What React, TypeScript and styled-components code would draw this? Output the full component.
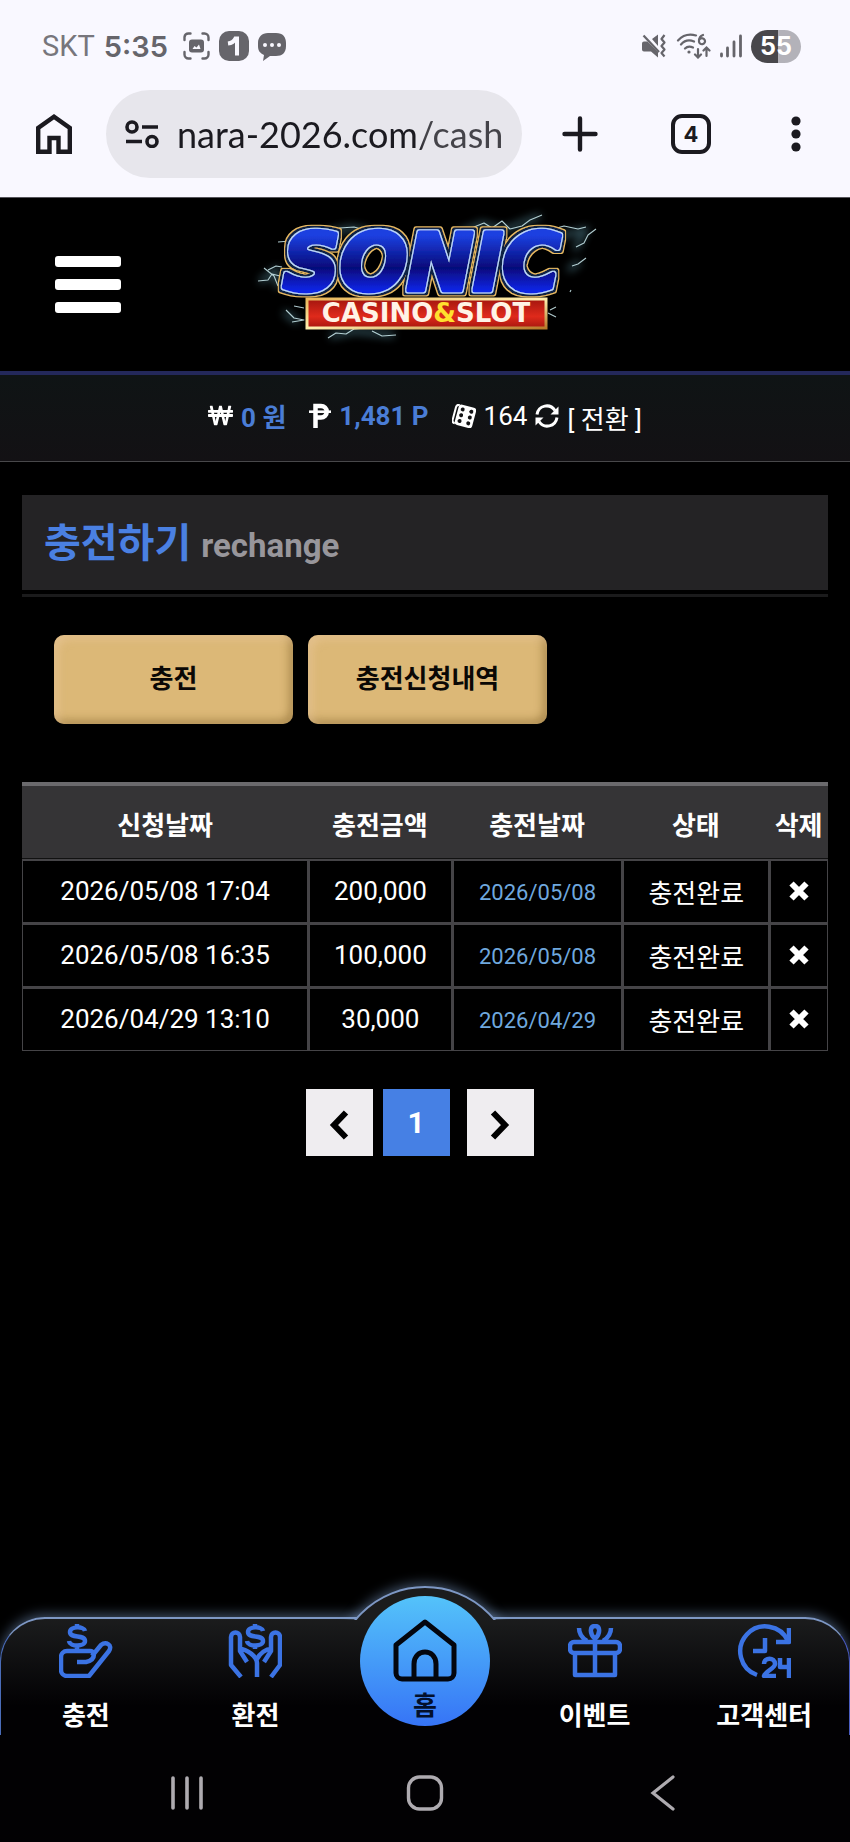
import { useState } from 'react';
import styled, { createGlobalStyle } from 'styled-components';
import { FaWonSign } from 'react-icons/fa';

const GlobalStyle = createGlobalStyle`
  * {
    box-sizing: border-box;
  }
  body {
    margin: 0;
    background-color: #000;
    color: #fff;
    font-family: Roboto, 'Noto Sans CJK KR', sans-serif;
    font-size: 26px;
  }
  button {
    padding: 0;
    border: 0;
    background: none;
    color: inherit;
    font: inherit;
    cursor: pointer;
  }
  a {
    color: inherit;
    text-decoration: none;
  }
  svg {
    display: block;
    flex-shrink: 0;
  }
`;

const Page = styled.div`
  display: flex;
  flex-direction: column;
  min-height: 100vh;
`;

const Browser = styled.div`
  background-color: #f9f8ff;
  color: #1b1a20;
  border-bottom: 1px solid #55545a;
`;

const StatusRow = styled.div`
  display: flex;
  align-items: center;
  justify-content: space-between;
  height: 90px;
  padding: 2px 49px 0 42px;
  color: #66656b;
`;

const StatusGroup = styled.div`
  display: flex;
  align-items: center;
  gap: 9px;
`;

const Carrier = styled.span`
  font-size: 29px;
  color: #77767c;
`;

const Clock = styled.span`
  margin-right: 6px;
  font-family: Inter, sans-serif;
  font-size: 29px;
  font-weight: 600;
`;

const Battery = styled.span`
  display: flex;
  align-items: center;
  justify-content: center;
  width: 50px;
  height: 33px;
  border-radius: 17px;
  background: linear-gradient(90deg, #48474b 55%, #b3b2b9 55%);
  color: #fff;
  font-family: Inter, sans-serif;
  font-size: 25px;
  font-weight: 700;
`;

const AddressRow = styled.div`
  display: flex;
  align-items: center;
  height: 107px;
  padding: 0 49px 19px 36px;
`;

const IconButton = styled.button`
  flex-shrink: 0;
`;

const Omnibox = styled.label`
  display: flex;
  flex: 1;
  align-items: center;
  gap: 18px;
  min-width: 0;
  height: 88px;
  margin: 0 40px 0 34px;
  padding: 0 19px;
  border-radius: 44px;
  background-color: #e7e6ec;
`;

const UrlInput = styled.input`
  flex: 1;
  min-width: 0;
  height: 60px;
  padding: 0;
  border: 0;
  outline: 0;
  background: none;
  color: #1b1a20;
  font-family: Lato, sans-serif;
  font-size: 36px;
  mask-image: linear-gradient(90deg, #000 74%, rgba(0, 0, 0, 0.8) 76%);
`;

const TabCount = styled.button`
  width: 40px;
  height: 40px;
  margin: 0 80px 0 73px;
  border: 4px solid #1b1a20;
  border-radius: 11px;
  font-family: Inter, sans-serif;
  font-size: 22px;
  font-weight: 700;
  line-height: 32px;
`;

const Header = styled.header`
  display: grid;
  grid-template-columns: 1fr auto 1fr;
  align-items: center;
  padding: 0 55px;
  border-bottom: 4px solid #23285a;
`;

const MenuButton = styled.button`
  display: flex;
  flex-direction: column;
  gap: 12px;
  width: 66px;
`;

const MenuBar = styled.span`
  height: 11px;
  border-radius: 3px;
  background-color: #fff;
`;

const Wallet = styled.div`
  display: flex;
  align-items: center;
  justify-content: center;
  height: 87px;
  padding-bottom: 5px;
  border-bottom: 1px solid #48484a;
  background: linear-gradient(#0f1415, #131114);
`;

const WalletItem = styled.span`
  display: flex;
  align-items: center;
  gap: 8px;
  margin-right: 23px;
`;

const Balance = styled.strong`
  color: #4a7dd6;
`;

const Switch = styled.button`
  display: flex;
  align-items: center;
  gap: 8px;
  margin-left: -15px;
`;

const SwitchText = styled.span`
  padding-top: 4px;
`;

const Main = styled.main`
  flex: 1;
  padding: 33px 22px 60px;
`;

const Title = styled.h1`
  display: flex;
  align-items: baseline;
  gap: 10px;
  height: 95px;
  margin: 0;
  padding: 0 22px;
  background-color: #242325;
  color: #4a80e2;
  font-size: 40px;
  line-height: 98px;
`;

const SubTitle = styled.small`
  color: #98969b;
  font-size: 33px;
`;

const TitleLine = styled.div`
  height: 3px;
  margin-top: 4px;
  background-color: #1b1b1c;
`;

const ButtonRow = styled.div`
  display: flex;
  gap: 15px;
  padding: 38px 32px 58px;
`;

const GoldButton = styled.button`
  flex: 0 1 239px;
  height: 89px;
  padding-bottom: 7px;
  border-radius: 10px;
  background-color: #dcb877;
  box-shadow:
    inset 4px 4px 8px rgba(240, 205, 165, 0.5),
    inset -4px -4px 8px rgba(90, 60, 10, 0.35);
  color: #0a0805;
  font-weight: 700;
`;

const Table = styled.table`
  width: 100%;
  table-layout: fixed;
  border-spacing: 0;
  text-align: center;
`;

const Th = styled.th<{ $width: string }>`
  width: ${(props) => props.$width};
  height: 77px;
  padding: 2px 0 0;
  border-top: 4px solid #6b6a6d;
  border-bottom: 1px solid #111;
  background-color: #353436;
  white-space: nowrap;
`;

const Td = styled.td`
  height: 64px;
  padding: 0 0 1px;
  border: 1px solid #454447;
  border-top-width: 2px;

  & + & {
    border-left-width: 2px;
  }
`;

const PaidDate = styled.span`
  color: #6fa8de;
  font-size: 22px;
`;

const DeleteButton = styled.button`
  display: block;
  margin: 0 auto;
`;

const Pagination = styled.nav`
  display: flex;
  justify-content: center;
  gap: 10px;
  margin-top: 38px;
  padding-right: 11px;
`;

const PageButton = styled.button`
  display: flex;
  align-items: center;
  justify-content: center;
  width: 67px;
  height: 67px;
  padding-top: 5px;
  background-color: #efedf0;
  color: #000;
`;

const CurrentPage = styled(PageButton)`
  margin-right: 7px;
  padding: 0;
  background-color: #4680e4;
  color: #fff;
  font-size: 30px;
  font-weight: 700;
`;

const BottomNav = styled.nav`
  position: relative;
  display: grid;
  grid-template-columns: repeat(5, 1fr);
  height: 118px;
  border: 2px solid #7d97c4;
  border-left: 1px solid #4a6cb8;
  border-right: 1px solid #4a5cc0;
  border-bottom: 0;
  border-radius: 45px 45px 0 0;
  background: linear-gradient(#1b1c1d, #020103 75%);
  box-shadow: 0 -3px 12px rgba(130, 165, 210, 0.45);
`;

/* only the cap of the circle that rises over the bar is shown */
const NavBump = styled.span`
  position: absolute;
  top: -33px;
  left: 50%;
  width: 182px;
  height: 182px;
  border: 2px solid #7d97c4;
  border-radius: 50%;
  background-color: #1b1c1d;
  box-shadow: 0 -3px 12px rgba(130, 165, 210, 0.45);
  transform: translateX(-50%);
  clip-path: inset(-20px 0 148px 0);
`;

const NavLink = styled.a`
  display: flex;
  flex-direction: column;
  align-items: center;
  gap: 19px;
  padding-top: 5px;
  font-weight: 700;
  line-height: 38px;
  white-space: nowrap;
`;

const NavIcon = styled.svg`
  width: 54px;
  height: 54px;
  fill: none;
  stroke: #3b73e4;
  stroke-width: 4.5;
  stroke-linejoin: round;
`;

const HomeLink = styled.a`
  position: relative;
  display: flex;
  flex-direction: column;
  align-items: center;
  justify-self: center;
  width: 130px;
  height: 130px;
  margin-top: -23px;
  padding-top: 22px;
  border-radius: 50%;
  background: linear-gradient(#54c3fa, #3674f6);
  color: #03102c;
  font-weight: 700;
  line-height: 48px;
`;

const SystemNav = styled.div`
  position: relative;
  display: flex;
  align-items: center;
  justify-content: center;
  gap: 198px;
  height: 107px;
  padding-top: 8px;
  background-color: #020103;
`;

const navItems = [
  {
    name: '충전',
    icon: (
      <>
        <path d="M26 7C25 2 11 2 11 8c0 7 15 2 15 9 0 6-15 6-16 0M18 0v5M18 20v7" />
        <path d="M18 38h9c5-1 8-4 8-8 0-2-2-3-4-3H8a6 6 0 0 0-6 6v13a6 6 0 0 0 6 6h22l20-25c4-6-3-10-8-6L33 32" />
      </>
    ),
  },
  {
    name: '환전',
    icon: (
      <>
        <path d="M35 7C34 2 20 2 20 8c0 7 15 2 15 9 0 6-15 6-16 0M27 0v5M27 20v5" />
        <path d="M13 53L3 41V13c0-6 9-6 9 0v14l7 11M12 25c6 0 17 7 17 14v14M43 53l9-12V13c0-6-9-6-9 0v14l-7 11M43 25c-5 0-11 4-14 10" />
      </>
    ),
  },
  { name: '홈', icon: null },
  {
    name: '이벤트',
    icon: (
      <>
        <rect x="2" y="18" width="50" height="11" rx="4" />
        <path d="M7 29v22h40V29M27 16v35" />
        <path d="M27 15c-6-6-5-13 0-13s6 7 0 13zM11 4c0 6 3 10 8 13M43 4c0 6-3 10-8 13" />
      </>
    ),
  },
  {
    name: '고객센터',
    icon: (
      <>
        <path d="M20 51A25 25 0 1 1 51 17" />
        <path d="M52 4v14H39M28 14v13H16" />
        <path d="M27 40c0-7 11-7 11 0 0 4-10 8-11 12h12M43 34v9h9M52 34v20" />
      </>
    ),
  },
];

const columns = [
  { name: '신청날짜', width: '35.5%' },
  { name: '충전금액', width: '17.8%' },
  { name: '충전날짜', width: '21.2%' },
  { name: '상태', width: '18.2%' },
  { name: '삭제', width: '7.3%' },
];

const history = [
  { date: '2026/05/08 17:04', amount: '200,000', paid: '2026/05/08' },
  { date: '2026/05/08 16:35', amount: '100,000', paid: '2026/05/08' },
  { date: '2026/04/29 13:10', amount: '30,000', paid: '2026/04/29' },
];

const StatusBar = () => (
  <StatusRow>
    <StatusGroup>
      <Carrier>SKT</Carrier>
      <Clock>5:35</Clock>
      <svg width="27" height="28" viewBox="0 0 27 28" fill="none" stroke="#66656b" strokeWidth="2.4" strokeLinecap="round">
        <path d="M1.5 8V5a4 4 0 0 1 4-3.5h2M19.5 1.5h2a4 4 0 0 1 4 4v2.5M25.5 20v2.5a4 4 0 0 1-4 4h-2M7.5 26.5h-2a4 4 0 0 1-4-4V20" />
        <rect x="6" y="7.5" width="15" height="13" rx="3" fill="#66656b" stroke="none" />
        <path d="M9.5 17l2-3 2 1.5 2.5-3 1.5 4.5z" fill="#f9f8ff" stroke="none" />
      </svg>
      <svg width="30" height="30" viewBox="0 0 30 30">
        <rect width="30" height="30" rx="10" fill="#66656b" />
        <path d="M9 12.5c4-.5 6-2 7.500-5h1.500v17" fill="none" stroke="#f9f8ff" strokeWidth="4" />
      </svg>
      <svg width="28" height="29" viewBox="0 0 28 29">
        <path d="M10 1h8c7 0 10 4 10 10v3c0 7-4 10-10 10h-6l-7 5 1-6c-4-2-6-4-6-9v-3C0 5 4 1 10 1z" fill="#66656b" />
        <g fill="#f9f8ff">
          <circle cx="7" cy="13" r="2" />
          <circle cx="14" cy="13" r="2" />
          <circle cx="21" cy="13" r="2" />
        </g>
      </svg>
    </StatusGroup>
    <StatusGroup>
      <svg width="24" height="24" viewBox="0 0 24 24" fill="none" stroke="#66656b" strokeWidth="2.2">
        <path d="M0 9.5a2 2 0 0 1 2-2h3.5L16 18v5.5l-7-6H2a2 2 0 0 1-2-2zM10 5l6-4.5V12z" fill="#66656b" stroke="none" />
        <path d="M1.5 1.5L17 18" />
        <path d="M22.5 1l-3 4 3 3.5-3 3.5 3 3.5-3 3.5 3 3.5" strokeLinejoin="round" />
      </svg>
      <svg width="36" height="26" viewBox="0 0 36 26" fill="none" stroke="#66656b" strokeWidth="2.2" strokeLinecap="round">
        <path d="M3 7.5C8 2 14 .5 21 2.5M6 11.5C9 8 14 6.5 19 8.5M10 15.5c2-2 5-2.5 8-1" />
        <circle cx="14" cy="19" r="1.6" fill="#66656b" stroke="none" />
        <path d="M28 2c-3 1-4 4-4 6a3 3 0 1 0 1-2M23 16v8M20 21.5l3 3 3-3M31.5 23v-8M28.5 17.5l3-3 3 3" />
      </svg>
      <svg width="22" height="24" viewBox="0 0 22 24" stroke="#66656b" strokeWidth="2.8" strokeLinecap="round">
        <path d="M1.5 20v2M7.5 14v8M14 8v14M20.5 2v20" />
      </svg>
      <Battery>55</Battery>
    </StatusGroup>
  </StatusRow>
);

const AddressBar = () => {
  const [url, setUrl] = useState('nara-2026.com/cash');
  return (
    <AddressRow>
      <IconButton aria-label="Home">
        <svg width="36" height="40" viewBox="0 0 36 40" fill="none" stroke="#1b1a20" strokeWidth="4.4">
          <path d="M2.2 37.8V14L18 2.8 33.8 14v23.8H22.5V24h-9v13.8z" />
        </svg>
      </IconButton>
      <Omnibox>
        <svg width="34" height="28" viewBox="0 0 34 28" fill="none" stroke="#1b1a20" strokeWidth="3.6">
          <circle cx="7" cy="7" r="5" />
          <circle cx="27" cy="21.5" r="5" />
          <path d="M17 7h16M1 21.5h16" />
        </svg>
        <UrlInput aria-label="URL" value={url} onChange={(e) => setUrl(e.target.value)} />
      </Omnibox>
      <IconButton aria-label="New tab">
        <svg width="36" height="36" viewBox="0 0 36 36" stroke="#1b1a20" strokeWidth="4.4" strokeLinecap="round">
          <path d="M18 2.5v31M2.5 18h31" />
        </svg>
      </IconButton>
      <TabCount>4</TabCount>
      <IconButton aria-label="More">
        <svg width="10" height="36" viewBox="0 0 10 36" fill="#1b1a20">
          <circle cx="5" cy="5" r="4.6" />
          <circle cx="5" cy="18" r="4.6" />
          <circle cx="5" cy="31" r="4.6" />
        </svg>
      </IconButton>
    </AddressRow>
  );
};

const Logo = () => (
  <svg width="370" height="173" viewBox="-10 -2 370 173">
    <defs>
      <linearGradient id="blue" x1="0" y1="0" x2="0" y2="1">
        <stop offset="0.2" stopColor="#1c3fe0" />
        <stop offset="0.55" stopColor="#060b7a" />
        <stop offset="0.8" stopColor="#0d25e6" />
      </linearGradient>
      <linearGradient id="gold" x1="0" y1="0" x2="1" y2="1">
        <stop offset="0" stopColor="#e9b75a" />
        <stop offset="0.5" stopColor="#fff0b0" />
        <stop offset="1" stopColor="#b9792a" />
      </linearGradient>
      <linearGradient id="red" x1="0" y1="0" x2="0" y2="1">
        <stop offset="0" stopColor="#a3160f" />
        <stop offset="0.6" stopColor="#df2a1b" />
        <stop offset="1" stopColor="#a8170f" />
      </linearGradient>
      <filter id="glow" x="-20%" y="-20%" width="140%" height="140%">
        <feGaussianBlur stdDeviation="4" />
      </filter>
      {/* light rim, navy band and gold edge grown outwards from the letters */}
      <filter id="rims" x="-10%" y="-20%" width="120%" height="140%">
        <feMorphology in="SourceAlpha" operator="dilate" radius="1" result="a" />
        <feMorphology in="SourceAlpha" operator="dilate" radius="3" result="b" />
        <feMorphology in="SourceAlpha" operator="dilate" radius="4" result="c" />
        <feFlood floodColor="#b9d6ff" />
        <feComposite in2="a" operator="in" result="rim" />
        <feFlood floodColor="#0c2344" />
        <feComposite in2="b" operator="in" result="navy" />
        <feFlood floodColor="#e8bb62" />
        <feComposite in2="c" operator="in" result="edge" />
        <feMerge>
          <feMergeNode in="edge" />
          <feMergeNode in="navy" />
          <feMergeNode in="rim" />
          <feMergeNode in="SourceGraphic" />
        </feMerge>
      </filter>
    </defs>
    <g fill="none" stroke="#6fb4c8" strokeWidth="5" filter="url(#glow)" opacity="0.5">
      <path d="M10 82l16-12 2 18M34 112l14 10M80 136l24-5 40 4M75 34l25-6 18 3M208 34l24-10 22 6 36-14M310 36l25-6-10 20M330 62l-12 8" />
    </g>
    <g fill="none" stroke="#cfeef2" strokeWidth="1.1" strokeLinejoin="round" opacity="0.85">
      <path d="M8 81l10-1 4-6 8 2M18 70l8-4 6 1M14 68l10 8 4 10M28 42l12-1M36 110l8 8 10 2-12 2M54 108l-10-2" />
      <path d="M78 138l8-5 10 1 8-5 12-1M122 131l10 5 14-1M78 32l12-4 14-1 14 4" />
      <path d="M210 32l14-5 10-4 8 5 10-7 8 8 12-3 8-6 12-5M300 30l14-4 14 3 8-2M346 29l-8 6-4 8-8 4M336 58l-8 6-6 2" />
      <path d="M300 110l6-3M298 113l8 4M320 92l1-2" />
    </g>
    <rect x="57" y="99" width="239" height="29" fill="url(#red)" stroke="url(#gold)" strokeWidth="3" />
    <text
      x="33"
      y="90"
      fill="url(#blue)"
      stroke="url(#blue)"
      strokeWidth="5"
      strokeLinejoin="round"
      filter="url(#rims)"
      fontFamily="'DejaVu Sans', sans-serif"
      fontSize="79"
      fontWeight="700"
      fontStyle="italic"
    >
      SONIC
    </text>
    <text
      x="176"
      y="122"
      textAnchor="middle"
      fill="#fff3e6"
      fontFamily="'DejaVu Sans', sans-serif"
      fontSize="26"
      fontWeight="700"
    >
      CASINO<tspan fill="#ffe02e">&amp;</tspan>SLOT
    </text>
  </svg>
);

const App = () => {
  return (
    <Page>
      <GlobalStyle />
      <Browser>
        <StatusBar />
        <AddressBar />
      </Browser>
      <Header>
        <MenuButton aria-label="menu">
          <MenuBar />
          <MenuBar />
          <MenuBar />
        </MenuButton>
        <Logo />
      </Header>
      <Wallet>
        <WalletItem>
          <FaWonSign size={25} />
          <Balance>0 원</Balance>
        </WalletItem>
        <WalletItem>
          <svg width="22" height="25" viewBox="0 0 22 25" fill="none" stroke="#fff" strokeWidth="4.5">
            <path d="M6.5 25V3H12a5 5 0 0 1 0 11.5H7" />
            <path d="M0 8.7h22" strokeWidth="2.6" />
          </svg>
          <Balance>1,481 P</Balance>
        </WalletItem>
        <WalletItem>
          <svg width="24" height="24" viewBox="0 0 24 24">
            <g transform="rotate(15 12 12)">
              <path d="M5 2.5a3 3 0 0 0-3 3v13a3 3 0 0 0 3 3" fill="none" stroke="#fff" strokeWidth="2" />
              <rect x="4.5" y="1.5" width="18" height="21" rx="3" fill="#fff" />
              <g fill="#121214">
                <circle cx="9" cy="6" r="2" />
                <circle cx="9" cy="12" r="2" />
                <circle cx="9" cy="18" r="2" />
                <circle cx="18" cy="6" r="2" />
                <circle cx="18" cy="12" r="2" />
                <circle cx="18" cy="18" r="2" />
              </g>
            </g>
          </svg>
          164
        </WalletItem>
        <Switch>
          <svg width="24" height="24" viewBox="0 0 24 24" fill="none" stroke="#fff" strokeWidth="3">
            <path d="M2 10.5C3.5 1 15 -1 20 6.5M22 13.5C20.5 23 9 25 4 17.5" />
            <path d="M23.5 2.5V10.5H15.5zM.5 21.5V13.5H8.5z" fill="#fff" stroke="none" />
          </svg>
          <SwitchText>[ 전환 ]</SwitchText>
        </Switch>
      </Wallet>
      <Main>
        <Title>
          충전하기<SubTitle>rechange</SubTitle>
        </Title>
        <TitleLine />
        <ButtonRow>
          <GoldButton>충전</GoldButton>
          <GoldButton>충전신청내역</GoldButton>
        </ButtonRow>
        <Table>
          <thead>
            <tr>
              {columns.map((column) => (
                <Th key={column.name} $width={column.width}>
                  {column.name}
                </Th>
              ))}
            </tr>
          </thead>
          <tbody>
            {history.map((item) => (
              <tr key={item.date}>
                <Td>{item.date}</Td>
                <Td>{item.amount}</Td>
                <Td>
                  <PaidDate>{item.paid}</PaidDate>
                </Td>
                <Td>충전완료</Td>
                <Td>
                  <DeleteButton aria-label="삭제">
                    <svg width="20" height="20" viewBox="0 0 20 20" stroke="#fff" strokeWidth="6">
                      <path d="M2.5 2.5l15 15M17.5 2.5l-15 15" />
                    </svg>
                  </DeleteButton>
                </Td>
              </tr>
            ))}
          </tbody>
        </Table>
        <Pagination>
          <PageButton aria-label="이전">
            <svg width="20" height="30" viewBox="0 0 20 30" fill="none" stroke="#000" strokeWidth="6">
              <path d="M17 2.5L5 15l12 12.5" />
            </svg>
          </PageButton>
          <CurrentPage>1</CurrentPage>
          <PageButton aria-label="다음">
            <svg width="20" height="30" viewBox="0 0 20 30" fill="none" stroke="#000" strokeWidth="6">
              <path d="M3 2.5L15 15 3 27.5" />
            </svg>
          </PageButton>
        </Pagination>
      </Main>
      <BottomNav>
        <NavBump />
        {navItems.map((item) =>
          item.icon ? (
            <NavLink key={item.name} href="#">
              <NavIcon viewBox="0 0 54 54">{item.icon}</NavIcon>
              {item.name}
            </NavLink>
          ) : (
            <HomeLink key={item.name} href="#">
              <svg width="64" height="64" viewBox="0 0 64 64" fill="none" stroke="#03060e" strokeWidth="5" strokeLinejoin="round">
                <path d="M3 27L32 4l29 23v28a6 6 0 0 1-6 6H9a6 6 0 0 1-6-6z" />
                <path d="M21 61V46c0-16 22-16 22 0v15" />
              </svg>
              {item.name}
            </HomeLink>
          ),
        )}
      </BottomNav>
      <SystemNav>
        <IconButton aria-label="Recents">
          <svg width="40" height="36" viewBox="0 0 40 36" stroke="#aeabb0" strokeWidth="3.6" strokeLinecap="round">
            <path d="M6 3v30M20 3v30M34 3v30" />
          </svg>
        </IconButton>
        <IconButton aria-label="Home screen">
          <svg width="40" height="36" viewBox="0 0 40 36" fill="none" stroke="#aeabb0" strokeWidth="3.4">
            <rect x="3.5" y="2" width="33" height="32" rx="11" />
          </svg>
        </IconButton>
        <IconButton aria-label="Back">
          <svg width="40" height="36" viewBox="0 0 40 36" fill="none" stroke="#aeabb0" strokeWidth="3.2" strokeLinecap="round">
            <path d="M30 2L10 18l20 16" />
          </svg>
        </IconButton>
      </SystemNav>
    </Page>
  );
};

export default App;
